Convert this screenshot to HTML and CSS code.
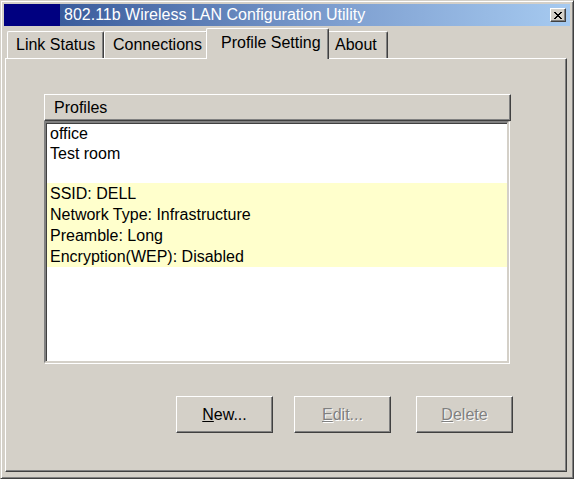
FILE: index.html
```html
<!DOCTYPE html>
<html lang="en">
<head>
<meta charset="utf-8">
<title>802.11b Wireless LAN Configuration Utility</title>
<link rel="stylesheet" href="styles.css">
</head>
<body>
<div class="window">
  <div class="titlebar">
    <div class="title-block"></div>
    <div class="title-main">
      <span class="title">802.11b Wireless LAN Configuration Utility</span>
      <button class="close" aria-label="Close">
        <svg width="8" height="7" viewBox="0 0 8 7"><path d="M0 0h2v1h1v1h2v-1h1v-1h2v1h-1v1h-1v1h-1v1h1v1h1v1h1v1h-2v-1h-1v-1h-2v1h-1v1h-2v-1h1v-1h1v-1h1v-1h-1v-1h-1v-1h-1z" fill="#000"/></svg>
      </button>
    </div>
  </div>
  <div class="tabs">
    <div class="tab">Link Status</div>
    <div class="tab">Connections</div>
    <div class="tab active">Profile Setting</div>
    <div class="tab">About</div>
  </div>
  <div class="panel">
    <div class="listview">
      <div class="lv-header"><div class="lv-col">Profiles</div></div>
      <div class="lv-body">
        <div class="lv-row">office</div>
        <div class="lv-row">Test room</div>
        <div class="lv-row"></div>
        <div class="lv-info">
          <div class="info-row">SSID: DELL</div>
          <div class="info-row">Network Type: Infrastructure</div>
          <div class="info-row">Preamble: Long</div>
          <div class="info-row">Encryption(WEP): Disabled</div>
        </div>
      </div>
    </div>
    <div class="buttons">
      <button class="btn"><u>N</u>ew...</button>
      <button class="btn disabled"><u>E</u>dit...</button>
      <button class="btn disabled btn-delete"><u>D</u>elete</button>
    </div>
  </div>
</div>
</body>
</html>
```
FILE: styles.css
```css
* { box-sizing: border-box; }
html, body { margin: 0; padding: 0; }
body {
  width: 574px;
  height: 479px;
  overflow: hidden;
  background: #d4d0c8;
  font-family: "Liberation Sans", Arial, sans-serif;
  font-size: 16px;
  color: #000;
}
.window {
  width: 574px;
  height: 479px;
  background: #d4d0c8;
  border: 1px solid;
  border-color: #d4d0c8 #404040 #404040 #d4d0c8;
  box-shadow: inset 1px 1px #fff, inset -1px -1px #808080;
  padding: 3px;
  display: flex;
  flex-direction: column;
}
.titlebar {
  height: 22px;
  display: flex;
  flex: none;
}
.title-block {
  width: 56px;
  background: #000080;
}
.title-main {
  flex: 1;
  display: flex;
  align-items: center;
  background: linear-gradient(to right, #3a5c9c, #7e9fd0 55%, #a6caf0);
  padding: 0 4px 0 4px;
}
.title {
  flex: 1;
  color: #fff;
  font-size: 16px;
  line-height: 22px;
  white-space: nowrap;
}
.close {
  width: 16px;
  height: 14px;
  padding: 0;
  margin: 0;
  background: #d4d0c8;
  border: 1px solid;
  border-color: #fff #404040 #404040 #fff;
  box-shadow: inset -1px -1px #808080;
  display: flex;
  align-items: center;
  justify-content: center;
}
.close svg { display: block; }
.tabs {
  height: 33px;
  flex: none;
  display: flex;
  align-items: flex-end;
  padding-left: 3px;
  position: relative;
  z-index: 1;
  margin-bottom: -1px;
}
.tab {
  height: 27px;
  padding: 0 8px;
  line-height: 25px;
  background: #d4d0c8;
  border-top: 1px solid #fff;
  border-left: 1px solid #fff;
  border-right: 1px solid #404040;
  box-shadow: inset -1px 0 #808080;
  border-radius: 2px 2px 0 0;
  margin-bottom: 1px;
  white-space: nowrap;
}
.tab:nth-child(1) { width: 97px; }
.tab:nth-child(2) { width: 104px; }
.tab:nth-child(4) { width: 61px; }
.tab.active {
  height: 31px;
  width: 123px;
  margin: 0 -2px;
  margin-bottom: 0;
  line-height: 27px;
  padding: 0 0 0 14px;
  position: relative;
  z-index: 2;
}
.tab.active + .tab { border-left: none; }
.panel {
  flex: 1;
  margin: 0 3px 3px 1px;
  border: 1px solid;
  border-color: #fff #404040 #404040 #fff;
  box-shadow: inset -1px -1px #808080;
  padding: 35px 0 0 38px;
  display: flex;
  flex-direction: column;
}
.listview { width: 467px; }
.lv-header {
  height: 27px;
  display: flex;
}
.lv-col {
  flex: 1;
  border: 1px solid;
  border-color: #fff #404040 #404040 #fff;
  box-shadow: inset -1px -1px #808080;
  padding-left: 9px;
  line-height: 25px;
}
.lv-body {
  height: 242px;
  background: #fff;
  border: 2px solid;
  border-color: #808080 #d4d0c8 #d4d0c8 #808080;
  box-shadow: inset 1px 1px #404040, 1px 1px #fff;
  width: 465px;
  padding: 0 0 0 1px;
}
.lv-row {
  height: 20px;
  line-height: 21px;
  padding-left: 3px;
}
.lv-info {
  background: #ffffcc;
}
.info-row {
  height: 21px;
  line-height: 22px;
  padding-left: 3px;
}
.buttons {
  width: 469px;
  margin-top: 33px;
  display: flex;
  justify-content: flex-end;
  gap: 21px;
}
.btn {
  width: 97px;
  height: 37px;
  padding: 0;
  font-family: inherit;
  font-size: 16px;
  color: #000;
  background: #d4d0c8;
  border: 1px solid;
  border-color: #fff #404040 #404040 #fff;
  box-shadow: inset -1px -1px #808080;
}
.btn-delete { margin-left: 4px; }
.btn.disabled {
  color: #808080;
  text-shadow: 1px 1px #fff;
}
```
